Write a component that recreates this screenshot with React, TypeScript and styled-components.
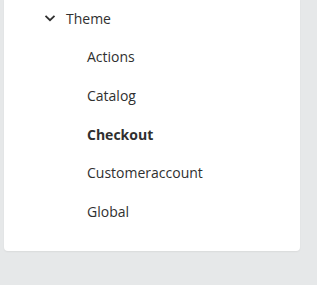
import React from 'react';
import styled, { createGlobalStyle } from 'styled-components';

const GlobalStyle = createGlobalStyle`
  html, body {
    margin: 0;
    padding: 0;
    background: #ffffff;
  }
  body {
    font-family: 'Open Sans', 'Liberation Sans', sans-serif;
    -webkit-font-smoothing: antialiased;
  }
`;

const Panel = styled.div`
  width: 317px;
  height: 285px;
  box-sizing: border-box;
  background-color: #e6e8e9;
  padding: 0 17px 33px 4px;
  overflow: hidden;
`;

const Card = styled.nav`
  background-color: #ffffff;
  border-radius: 0 0 4px 4px;
  box-shadow: 0 1px 2px rgba(0, 0, 0, 0.06);
  height: 100%;
  box-sizing: border-box;
  padding-top: 0;
`;

const List = styled.ul`
  list-style: none;
  margin: -1px 0 0;
  padding: 0;
`;

const Row = styled.li<{ $depth: number; $active?: boolean }>`
  display: flex;
  align-items: center;
  height: 38.6px;
  padding-left: ${(p) => (p.$depth === 0 ? 40 : 83)}px;
  font-size: 14px;
  color: #303030;
  font-weight: ${(p) => (p.$active ? 700 : 400)};
  cursor: pointer;
`;

const Chevron = styled.svg`
  width: 12px;
  height: 12px;
  margin-right: 10px;
  flex-shrink: 0;
`;

const children = ['Actions', 'Catalog', 'Checkout', 'Customeraccount', 'Global'];

export default function App() {
  return (
    <>
      <GlobalStyle />
      <Panel>
        <Card>
          <List>
            <Row $depth={0}>
              <Chevron viewBox="0 0 12 12">
                <path d="M1.5 3.8 L6 8.2 L10.5 3.8" fill="none" stroke="#303030" strokeWidth="1.8" />
              </Chevron>
              Theme
            </Row>
            {children.map((c) => (
              <Row key={c} $depth={1} $active={c === 'Checkout'}>
                {c}
              </Row>
            ))}
          </List>
        </Card>
      </Panel>
    </>
  );
}
